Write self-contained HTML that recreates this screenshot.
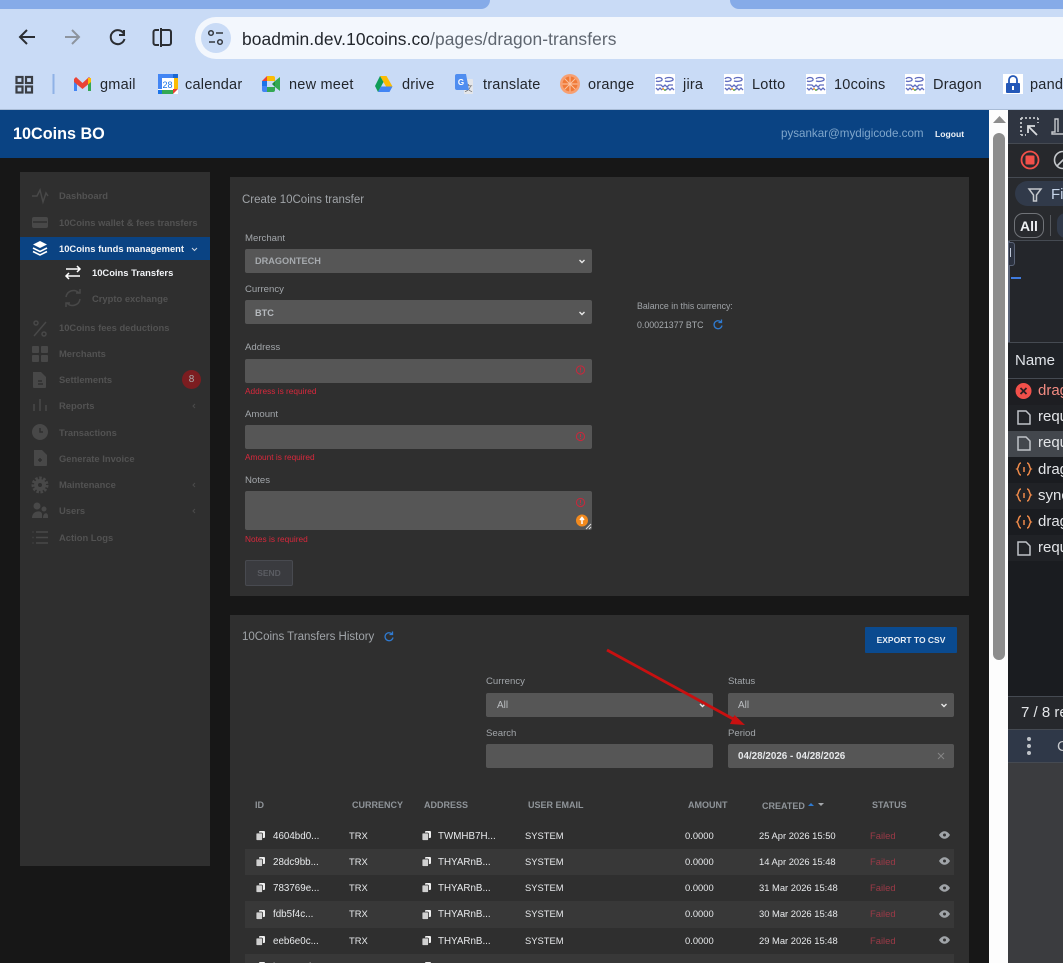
<!DOCTYPE html>
<html><head><meta charset="utf-8"><title>10Coins BO</title>
<style>
html,body{margin:0;padding:0;background:#171717;overflow:hidden;width:1063px;height:963px}
#root{position:relative;width:1063px;height:963px;overflow:hidden;font-family:"Liberation Sans",sans-serif}
.b{position:absolute}
.t{position:absolute;white-space:nowrap;line-height:14px;height:14px}
svg{position:absolute;overflow:visible}
.bm{font-size:14.5px;color:#22262c;letter-spacing:.22px}
.s{font-size:9.4px;color:#525252;font-weight:bold}
.l{font-size:9.6px;color:#a2a6aa;margin-top:1px}
.inp{position:absolute;background:#565656;border-radius:2px}
.err{font-size:8.3px;color:#d8283c}
.th{font-size:9px;color:#8f9499;font-weight:bold}
.td{font-size:9.4px;color:#e8eaec}
.id{font-size:9.8px;margin-top:1px}
.f{font-size:9.4px;color:#9c3a47}
.dv{font-size:15px;color:#e3e5e8}
</style></head><body><div id="root">
<!-- chrome -->
<div class="b" style="left:0;top:0;width:1063px;height:110px;background:#c9dbf6"></div>
<div class="b" style="left:0;top:0;width:490px;height:9px;background:#86abe8;border-radius:0 0 9px 0"></div>
<div class="b" style="left:730px;top:0;width:333px;height:9px;background:#86abe8;border-radius:0 0 0 9px"></div>
<div class="b" style="left:195px;top:17px;width:868px;height:42px;background:#f3f7fd;border-radius:21px 0 0 21px"></div>
<div class="b" style="left:201px;top:23px;width:30px;height:30px;background:#c9dbf6;border-radius:50%"></div>
<div class="b" style="left:0;top:109px;width:1063px;height:1px;background:#a9bcd6"></div>
<svg style="left:0;top:0" width="240" height="60" fill="none" stroke="#2b2e33" stroke-width="2">
<path d="M35 37H21M27 30l-7 7 7 7"/>
<path d="M79 37H65M72 30l7 7-7 7" stroke="#8d949e"/>
<path d="M124 34a7 7 0 1 0 .5 5M124 30v5h-5"/>
<path d="M159 30h-3.500a2 2 0 0 0-2 2v11a2 2 0 0 0 2 2h3.500M161 28v19M161 30h8a2 2 0 0 1 2 2v11a2 2 0 0 1-2 2h-8"/>
<g stroke-width="1.500" stroke="#33373d"><circle cx="211" cy="33" r="2.300"/><path d="M216 33h7M209 42h6"/><circle cx="220" cy="42" r="2.300"/></g>
</svg>
<div class="t" style="left:242px;top:30px;font-size:17.4px;line-height:18px;height:18px;color:#22262c;letter-spacing:.08px">boadmin.dev.10coins.co<span style="color:#5f6670">/pages/dragon-transfers</span></div>
<!-- bookmark icons -->
<svg style="left:0;top:70px" width="1063" height="30">
<g fill="none" stroke="#3a3e44" stroke-width="2.200"><rect x="16.500" y="7" width="6" height="6"/><rect x="26" y="7" width="6" height="6"/><rect x="16.500" y="16.500" width="6" height="6"/><rect x="26" y="16.500" width="6" height="6"/></g>
<rect x="52.500" y="4" width="2" height="20" fill="#8fb2e6"/>
<!-- gmail -->
<g transform="translate(2,0)"><path d="M72 21V9h3v12z" fill="#4285f4"/><path d="M86 21h3V9h-3z" fill="#34a853"/><path d="M72 9l2-2 6.500 6 6.500-6 2 2v3l-8.500 7-8.500-7z" fill="#ea4335"/><path d="M86 8l3 0v4l-3 2.500z" fill="#fbbc04"/></g>
<!-- calendar -->
<g transform="translate(5,0)"><rect x="153" y="4" width="20" height="20" fill="#fff"/><path d="M153 4h15v4h-11v11h-4z" fill="#4285f4"/><path d="M168 4h5v4h-5z" fill="#1967d2"/><path d="M169 8h4v11h-4z" fill="#fbbc04"/><path d="M157 20h11v4h-11z" fill="#34a853"/><path d="M153 20h4v4h-4z" fill="#1a73e8"/><path d="M168 19h5l-5 5z" fill="#ea4335"/>
<text x="162.500" y="18" font-size="9" fill="#1a73e8" text-anchor="middle" font-family="Liberation Sans">28</text></g>
<!-- meet -->
<g transform="translate(8,0)"><path d="M254 11l5-5v5z" fill="#ea4335"/><path d="M259 6h6a2 2 0 0 1 2 2v3h-8z" fill="#fbbc04"/><path d="M254 11h5v5h-5z" fill="#1a73e8"/><path d="M254 16h5v6h-3a2 2 0 0 1-2-2z" fill="#4285f4"/><path d="M259 17h8v3a2 2 0 0 1-2 2h-6z" fill="#34a853"/><path d="M267 11v6l5 4V7z" fill="#34a853"/><path d="M267 11l-3 3 3 3z" fill="#1e8e3e"/></g>
<!-- drive -->
<g transform="translate(12,0)"><path d="M368 6h6.500l6 10.500h-6.500z" fill="#fbbc04"/><path d="M368 6l-5 10 3 6 5.500-10z" fill="#0f9d58"/><path d="M366 22h11.500l3-5.500H369z" fill="#4285f4"/></g>
<!-- translate -->
<g transform="translate(14,0)"><rect x="450" y="9" width="9" height="15" rx="1" fill="#e4e6ea"/><text x="454.500" y="21" font-size="8" fill="#666" text-anchor="middle" font-family="Noto Sans CJK SC">文</text>
<path d="M443 4h9l3 16h-12a2 2 0 0 1-2-2V6a2 2 0 0 1 2-2z" fill="#4f8df0"/><text x="447" y="15" font-size="8" font-weight="bold" fill="#fff" text-anchor="middle" font-family="Liberation Sans">G</text></g>
<!-- orange -->
<circle cx="570" cy="14" r="10" fill="#f7a072"/><circle cx="570" cy="14" r="7.500" fill="#f07a38"/><g stroke="#fbc7a6" stroke-width="1"><path d="M570 6.500v15M562.500 14h15M564.700 8.700l10.600 10.600M575.300 8.700l-10.600 10.600"/></g>
<!-- weave icons -->
<g id="wv"><rect x="655" y="4" width="20" height="20" fill="#fff"/><g fill="none" stroke="#5f6cc0" stroke-width="1.300"><path d="M656 9c1-2 5-2 6 0s-4 3-6 2M665 9c1-2 7-2 8 0s-5 3-8 2M656 15h5l2 2 2-2 2 2 2-2h4M656 18l2 2 2-2 2 2M666 20l2-2 2 2 2-2 2 2"/></g><circle cx="663" cy="19" r="1" fill="#e88a2a"/><circle cx="665" cy="20" r="1" fill="#58a545"/></g>
<use href="#wv" x="69"/><use href="#wv" x="151"/><use href="#wv" x="250"/>
<!-- lock -->
<rect x="1003" y="4" width="20" height="20" fill="#fff"/><rect x="1006" y="13" width="14" height="10" rx="1" fill="#2458b8"/><path d="M1009 13v-3a4 4 0 0 1 8 0v3" fill="none" stroke="#2458b8" stroke-width="1.800"/><rect x="1012" y="16" width="2" height="4" fill="#fff"/>
</svg>
<div class="t bm" style="left:100px;top:78px">gmail</div>
<div class="t bm" style="left:185px;top:78px">calendar</div>
<div class="t bm" style="left:289px;top:78px">new meet</div>
<div class="t bm" style="left:402px;top:78px">drive</div>
<div class="t bm" style="left:483px;top:78px">translate</div>
<div class="t bm" style="left:588px;top:78px">orange</div>
<div class="t bm" style="left:683px;top:78px">jira</div>
<div class="t bm" style="left:752px;top:78px">Lotto</div>
<div class="t bm" style="left:834px;top:78px">10coins</div>
<div class="t bm" style="left:933px;top:78px">Dragon</div>
<div class="t bm" style="left:1030px;top:78px">pandora</div>

<!-- app header -->
<div class="b" style="left:0;top:110px;width:989px;height:48px;background:#0a4383"></div>
<div class="t" style="left:13px;top:126px;font-size:16.2px;line-height:16px;height:16px;font-weight:bold;color:#fff">10Coins BO</div>
<div class="t" style="left:781px;top:127px;font-size:11.6px;color:#7fa6cb">pysankar@mydigicode.com</div>
<div class="t" style="left:935px;top:127px;font-size:8.6px;font-weight:bold;color:#eef2f7">Logout</div>

<!-- sidebar -->
<div class="b" style="left:20px;top:172px;width:190px;height:694px;background:#2f2f2f"></div>
<div class="b" style="left:20px;top:237px;width:190px;height:23px;background:#0a4383"></div>
<svg style="left:0;top:0" width="230" height="560" fill="none" stroke="#484848" stroke-width="1.500">
<path d="M32 196h5l3-6 3 12 3-9 2 3"/>
<rect x="32" y="217" width="16" height="11" rx="2" fill="#484848" stroke="none"/><path d="M33 222h14" stroke="#2f2f2f"/>
<g fill="#fff" stroke="none"><path d="M40 241l7 3.500-7 3.500-7-3.500z"/></g><path d="M33 248l7 3.500 7-3.500M33 251.500l7 3.500 7-3.500" stroke="#fff" stroke-width="1.600"/>
<path d="M66 269h14M77 266l3 3-3 3M80 276H66M69 273l-3 3 3 3" stroke="#fff" stroke-width="1.500"/>
<path d="M66 297a7.500 7.500 0 0 1 13-4M80 299a7.500 7.500 0 0 1-13 4M76 293h4v-4M70 303h-4v4"/>
<path d="M46 322l-12 14" stroke-width="1.500"/><circle cx="36" cy="323" r="2"/><circle cx="44" cy="334" r="2"/>
<g fill="#484848" stroke="none"><rect x="32" y="346" width="7" height="7" rx="1"/><rect x="41" y="346" width="7" height="7" rx="1"/><rect x="32" y="355" width="7" height="7" rx="1"/><rect x="41" y="355" width="7" height="7" rx="1"/>
<path d="M33 372h8l5 5v10a1 1 0 0 1-1 1H34a1 1 0 0 1-1-1z"/><circle cx="40" cy="432" r="8"/><path d="M34 450h8l5 5v10a1 1 0 0 1-1 1H35a1 1 0 0 1-1-1z"/>
<circle cx="40" cy="485" r="6"/><circle cx="37" cy="506" r="3.500"/><circle cx="44" cy="509" r="2.500"/><path d="M32 518c0-8 10-8 10-4v4zM43 518c0-6 5-6 5-2v2z"/></g>
<path d="M38 381h4M38 384h5" stroke="#2f2f2f"/>
<path d="M34 411v-7M40 411v-12M46 411v-6"/>
<path d="M40 428v4h3" stroke="#2f2f2f"/><path d="M38 460h4M40 458v4" stroke="#2f2f2f"/>
<circle cx="40" cy="485" r="7" stroke-width="3" stroke-dasharray="2.500 1.500"/><circle cx="40" cy="485" r="2" fill="#2f2f2f" stroke="none"/>
<path d="M36 532h12M36 537.500h12M36 543h12M32.500 532h1M32.500 537.500h1M32.500 543h1"/>
<path d="M192 248l2.500 2.500 2.500-2.500" stroke="#cfd8e3" stroke-width="1"/>
<path d="M195 404l-2 2 2 2M195 483l-2 2 2 2M195 509l-2 2 2 2" stroke-width="1" stroke="#4a4a4a"/>
</svg>
<div class="t s" style="left:59px;top:189px">Dashboard</div>
<div class="t s" style="left:59px;top:216px">10Coins wallet &amp; fees transfers</div>
<div class="t s" style="left:59px;top:242px;color:#f2f4f7">10Coins funds management</div>
<div class="t s" style="left:92px;top:266px;color:#f2f4f7">10Coins Transfers</div>
<div class="t s" style="left:92px;top:292px">Crypto exchange</div>
<div class="t s" style="left:59px;top:321px">10Coins fees deductions</div>
<div class="t s" style="left:59px;top:347px">Merchants</div>
<div class="t s" style="left:59px;top:373px">Settlements</div>
<div class="t s" style="left:59px;top:399px">Reports</div>
<div class="t s" style="left:59px;top:426px">Transactions</div>
<div class="t s" style="left:59px;top:452px">Generate Invoice</div>
<div class="t s" style="left:59px;top:478px">Maintenance</div>
<div class="t s" style="left:59px;top:504px">Users</div>
<div class="t s" style="left:59px;top:531px">Action Logs</div>
<div class="b" style="left:182px;top:370px;width:19px;height:19px;border-radius:50%;background:#7c1d20"></div>
<div class="t" style="left:182px;top:373px;width:19px;text-align:center;font-size:10px;color:#aaa">8</div>

<!-- card 1 -->
<div class="b" style="left:230px;top:177px;width:739px;height:419px;background:#2f2f2f"></div>
<div class="t" style="left:242px;top:193px;font-size:11.5px;color:#a0a4a8">Create 10Coins transfer</div>
<div class="t l" style="left:245px;top:231px">Merchant</div>
<div class="inp" style="left:245px;top:249px;width:347px;height:24px"></div>
<div class="t" style="left:255px;top:254px;font-size:9.2px;font-weight:bold;color:#a6aaae">DRAGONTECH</div>
<div class="t l" style="left:245px;top:282px">Currency</div>
<div class="inp" style="left:245px;top:300px;width:347px;height:24px"></div>
<div class="t" style="left:255px;top:306px;font-size:9.2px;font-weight:bold;color:#b6babe">BTC</div>
<div class="t l" style="left:245px;top:340px">Address</div>
<div class="inp" style="left:245px;top:359px;width:347px;height:24px"></div>
<div class="t err" style="left:245px;top:384px">Address is required</div>
<div class="t l" style="left:245px;top:407px">Amount</div>
<div class="inp" style="left:245px;top:425px;width:347px;height:24px"></div>
<div class="t err" style="left:245px;top:450px">Amount is required</div>
<div class="t l" style="left:245px;top:473px">Notes</div>
<div class="inp" style="left:245px;top:491px;width:347px;height:39px"></div>
<div class="t err" style="left:245px;top:532px">Notes is required</div>
<div class="b" style="left:245px;top:560px;width:46px;height:24px;background:#3a3b3f;border:1px solid #484a50;border-radius:2px"></div>
<div class="t" style="left:245px;top:566px;width:48px;text-align:center;font-size:8.5px;font-weight:bold;color:#5a5c62">SEND</div>
<div class="t" style="left:637px;top:299px;font-size:8.8px;color:#a0a4a8">Balance in this currency:</div>
<div class="t" style="left:637px;top:318px;font-size:8.8px;color:#a8acb0">0.00021377 BTC</div>

<!-- card 2 -->
<div class="b" style="left:230px;top:615px;width:739px;height:348px;background:#2f2f2f"></div>
<div class="t" style="left:242px;top:630px;font-size:11.5px;color:#a0a4a8">10Coins Transfers History</div>
<div class="b" style="left:865px;top:627px;width:92px;height:26px;background:#0a4a8f;border-radius:1px"></div>
<div class="t" style="left:865px;top:633px;width:92px;text-align:center;font-size:8.5px;font-weight:bold;color:#e8eef5">EXPORT TO CSV</div>
<div class="t l" style="left:486px;top:674px">Currency</div>
<div class="t l" style="left:728px;top:674px">Status</div>
<div class="inp" style="left:486px;top:693px;width:227px;height:24px"></div>
<div class="inp" style="left:728px;top:693px;width:226px;height:24px"></div>
<div class="t" style="left:497px;top:699px;font-size:10px;color:#bcbfc2">All</div>
<div class="t" style="left:738px;top:699px;font-size:10px;color:#bcbfc2">All</div>
<div class="t l" style="left:486px;top:726px">Search</div>
<div class="t l" style="left:728px;top:726px">Period</div>
<div class="inp" style="left:486px;top:744px;width:227px;height:24px"></div>
<div class="inp" style="left:728px;top:744px;width:226px;height:24px"></div>
<div class="t" style="left:738px;top:750px;font-size:9.85px;font-weight:bold;color:#e6e8ea">04/28/2026 - 04/28/2026</div>

<div class="b" style="left:245px;top:849px;width:709px;height:26px;background:#383838"></div>
<div class="b" style="left:245px;top:901px;width:709px;height:27px;background:#383838"></div>
<div class="b" style="left:245px;top:954px;width:709px;height:9px;background:#383838"></div>

<div class="t th" style="left:255px;top:798px">ID</div>
<div class="t th" style="left:352px;top:798px">CURRENCY</div>
<div class="t th" style="left:424px;top:798px">ADDRESS</div>
<div class="t th" style="left:528px;top:798px">USER EMAIL</div>
<div class="t th" style="left:688px;top:798px">AMOUNT</div>
<div class="t th" style="left:762px;top:799px">CREATED</div>
<div class="t th" style="left:872px;top:798px">STATUS</div>

<div class="t td id" style="left:273px;top:829px">4604bd0...</div><div class="t td" style="left:349px;top:829px">TRX</div><div class="t td id" style="left:438px;top:829px">TWMHB7H...</div><div class="t td" style="left:525px;top:829px">SYSTEM</div><div class="t td" style="left:685px;top:829px">0.0000</div><div class="t td" style="left:759px;top:829px">25 Apr 2026 15:50</div><div class="t f" style="left:870px;top:829px">Failed</div>
<div class="t td id" style="left:273px;top:855px">28dc9bb...</div><div class="t td" style="left:349px;top:855px">TRX</div><div class="t td id" style="left:438px;top:855px">THYARnB...</div><div class="t td" style="left:525px;top:855px">SYSTEM</div><div class="t td" style="left:685px;top:855px">0.0000</div><div class="t td" style="left:759px;top:855px">14 Apr 2026 15:48</div><div class="t f" style="left:870px;top:855px">Failed</div>
<div class="t td id" style="left:273px;top:881px">783769e...</div><div class="t td" style="left:349px;top:881px">TRX</div><div class="t td id" style="left:438px;top:881px">THYARnB...</div><div class="t td" style="left:525px;top:881px">SYSTEM</div><div class="t td" style="left:685px;top:881px">0.0000</div><div class="t td" style="left:759px;top:881px">31 Mar 2026 15:48</div><div class="t f" style="left:870px;top:881px">Failed</div>
<div class="t td id" style="left:273px;top:907px">fdb5f4c...</div><div class="t td" style="left:349px;top:907px">TRX</div><div class="t td id" style="left:438px;top:907px">THYARnB...</div><div class="t td" style="left:525px;top:907px">SYSTEM</div><div class="t td" style="left:685px;top:907px">0.0000</div><div class="t td" style="left:759px;top:907px">30 Mar 2026 15:48</div><div class="t f" style="left:870px;top:907px">Failed</div>
<div class="t td id" style="left:273px;top:934px">eeb6e0c...</div><div class="t td" style="left:349px;top:934px">TRX</div><div class="t td id" style="left:438px;top:934px">THYARnB...</div><div class="t td" style="left:525px;top:934px">SYSTEM</div><div class="t td" style="left:685px;top:934px">0.0000</div><div class="t td" style="left:759px;top:934px">29 Mar 2026 15:48</div><div class="t f" style="left:870px;top:934px">Failed</div>
<div class="t td id" style="left:273px;top:960px">b3e1a7d...</div><div class="t td id" style="left:438px;top:960px">THYARnB...</div>

<svg style="left:0;top:0" width="1000" height="963" fill="none">
<defs><g id="cp"><rect x="3" y="0" width="6" height="7" rx="1" fill="#f0f0f0"/><rect x="0" y="2" width="6.500" height="7.500" rx="1" fill="#d0d0d0" stroke="#2f2f2f" stroke-width=".8"/></g>
<g id="ey"><path d="M0 4c3-5 8-5 11 0-3 5-8 5-11 0z" fill="#a0a4a8"/><circle cx="5.500" cy="4" r="1.500" fill="#333"/></g>
<path id="ch" d="M0 0l2.500 2.500 2.500-2.500" stroke="#e8e8e8" stroke-width="1.400"/>
<g id="ex"><circle cx="0" cy="0" r="4.100" stroke="#c8283c" stroke-width="1"/><path d="M0-2.500v3M0 1.400v1" stroke="#c8283c" stroke-width="1"/></g></defs>
<use href="#ch" x="579.500" y="260"/><use href="#ch" x="579.500" y="312"/><use href="#ch" x="941.500" y="704"/><use href="#ch" x="700" y="704"/>
<use href="#ex" x="580.500" y="370"/><use href="#ex" x="580.500" y="436.500"/><use href="#ex" x="580.500" y="502.500"/>
<path d="M586 529l5-5M589 529l2-2" stroke="#ddd" stroke-width="1"/>
<circle cx="582" cy="520.500" r="6" fill="#f28a1e"/><path d="M582 524v-6M580 520l2-2.500 2 2.500" stroke="#fff" stroke-width="1.500"/>
<g stroke="#2f7ad0" stroke-width="1.300"><path d="M721 322a4 4 0 1 0 1 3.500M721.500 319.500v3h-3"/><path d="M392 634a4 4 0 1 0 1 3.500M392.500 631.500v3h-3"/></g>
<path d="M938 753l6 6M944 753l-6 6" stroke="#858585" stroke-width="1"/>
<path d="M808 806l3-3 3 3z" fill="#2f7ad0"/><path d="M818 803h6l-3 3z" fill="#a5a8ac"/>
<use href="#cp" x="256" y="831"/><use href="#cp" x="256" y="857"/><use href="#cp" x="256" y="883"/><use href="#cp" x="256" y="910"/><use href="#cp" x="256" y="936"/><use href="#cp" x="256" y="962"/>
<use href="#cp" x="422" y="831"/><use href="#cp" x="422" y="857"/><use href="#cp" x="422" y="883"/><use href="#cp" x="422" y="910"/><use href="#cp" x="422" y="936"/><use href="#cp" x="422" y="962"/>
<use href="#ey" x="939" y="831"/><use href="#ey" x="939" y="857"/><use href="#ey" x="939" y="884"/><use href="#ey" x="939" y="910"/><use href="#ey" x="939" y="936"/>
<path d="M607 650L735 720" stroke="#c81010" stroke-width="2.800"/><path d="M745 725l-15-1 4.500-9z" fill="#c81010"/>
</svg>

<!-- scrollbar -->
<div class="b" style="left:989px;top:110px;width:19px;height:853px;background:#fdfdfd"></div>
<div class="b" style="left:993px;top:133px;width:12px;height:527px;background:#8d8d8d;border-radius:6px"></div>
<svg style="left:993px;top:115px" width="13" height="9"><path d="M0 8L6.500 1 13 8z" fill="#8d8d8d"/></svg>

<!-- devtools -->
<div class="b" style="left:1008px;top:110px;width:55px;height:853px;background:#282a2e;overflow:hidden">
  <div class="b" style="left:0;top:0;width:55px;height:33px;background:#2f3541"></div>
  <div class="b" style="left:0;top:33px;width:55px;height:1px;background:#454a52"></div>
  <div class="b" style="left:0;top:34px;width:55px;height:33px;background:#26282c"></div>
  <div class="b" style="left:0;top:67px;width:55px;height:1px;background:#454a52"></div>
  <div class="b" style="left:7px;top:71px;width:60px;height:25px;background:#313a4a;border-radius:13px"></div>
  <div class="b" style="left:6px;top:103px;width:30px;height:25px;border:1px solid #707378;border-radius:9px;box-sizing:border-box"></div>
  <div class="b" style="left:42px;top:105px;width:1px;height:21px;background:#55585d"></div>
  <div class="b" style="left:49px;top:103px;width:20px;height:25px;background:#313a4a;border-radius:9px"></div>
  <div class="b" style="left:0;top:130px;width:55px;height:1px;background:#454a52"></div>
  <div class="b" style="left:0;top:131px;width:55px;height:101px;background:#24262b"></div>
  <div class="b" style="left:0;top:131px;width:2px;height:101px;background:#5b6478"></div>
  <div class="b" style="left:0;top:132px;width:5px;height:22px;background:#2c3240;border:1px solid #5b6478;border-radius:0 3px 3px 0"></div>
  <div class="b" style="left:2px;top:138px;width:1px;height:9px;background:#c0c8d8"></div>
  <div class="b" style="left:3px;top:167px;width:10px;height:2px;background:#3f7be0"></div>
  <div class="b" style="left:0;top:232px;width:55px;height:1px;background:#454a52"></div>
  <div class="b" style="left:0;top:233px;width:55px;height:35px;background:#1f2227"></div>
  <div class="b" style="left:0;top:268px;width:55px;height:318px;background:#1a1c20"></div>
  <div class="b" style="left:0;top:268px;width:55px;height:1px;background:#454a52"></div>
  <div class="b" style="left:0;top:269px;width:55px;height:26px;background:#1d1e22"></div>
  <div class="b" style="left:0;top:295px;width:55px;height:26px;background:#202226"></div>
  <div class="b" style="left:0;top:321px;width:55px;height:26px;background:#43474d"></div>
  <div class="b" style="left:0;top:347px;width:55px;height:26px;background:#1a1c20"></div>
  <div class="b" style="left:0;top:373px;width:55px;height:26px;background:#202226"></div>
  <div class="b" style="left:0;top:425px;width:55px;height:26px;background:#202226"></div>
  <div class="b" style="left:0;top:586px;width:55px;height:1px;background:#454a52"></div>
  <div class="b" style="left:0;top:587px;width:55px;height:32px;background:#26282c"></div>
  <div class="b" style="left:0;top:619px;width:55px;height:34px;background:#2f3848;border-top:1px solid #454a52;border-bottom:1px solid #454a52;box-sizing:border-box"></div>
  <div class="b" style="left:0;top:653px;width:55px;height:200px;background:#3b3c3f"></div>
  <div class="t dv" style="left:43px;top:78px;color:#c5d4e8">Filter</div>
  <div class="t" style="left:6px;top:109px;width:30px;text-align:center;font-size:14px;font-weight:bold;color:#eef0f3">All</div>
  <div class="t dv" style="left:7px;top:244px;color:#dfe3e8">Name</div>
  <div class="t dv" style="left:30px;top:274px;color:#f28b82">dragon</div>
  <div class="t dv" style="left:30px;top:300px">request</div>
  <div class="t dv" style="left:30px;top:326px">request</div>
  <div class="t dv" style="left:30px;top:353px">dragon</div>
  <div class="t dv" style="left:30px;top:379px">sync</div>
  <div class="t dv" style="left:30px;top:405px">dragon</div>
  <div class="t dv" style="left:30px;top:431px">request</div>
  <div class="t dv" style="left:13px;top:596px">7 / 8 requests</div>
  <div class="t dv" style="left:49px;top:630px;color:#c5c8cc">Console</div>
  <svg style="left:0;top:0" width="55" height="700" fill="none">
    <path d="M13 8h17M13 8v17M13 25h5M30 8v5" stroke="#c5c8cc" stroke-width="1.800" stroke-dasharray="2 2"/><path d="M29 25l-9-9M20 23v-7h7" stroke="#d8dadd" stroke-width="1.800"/>
    <path d="M50 22V9h-3v13h-3v2h11" stroke="#c5c8cc" stroke-width="1.400"/>
    <circle cx="22" cy="50" r="8.500" stroke="#f2504a" stroke-width="1.800"/><rect x="17.500" y="45.500" width="9" height="9" rx="1" fill="#f2504a"/>
    <circle cx="55" cy="50" r="8.500" stroke="#c5c8cc" stroke-width="1.600"/><path d="M49 56l12-12" stroke="#c5c8cc" stroke-width="1.600"/>
    <path d="M21 79h12l-4.500 6v6h-3v-6z" stroke="#c5c8cc" stroke-width="1.500"/>
    <circle cx="15.500" cy="281" r="8" fill="#f2504a"/><path d="M12.500 278l6 6M18.500 278l-6 6" stroke="#2a1f22" stroke-width="1.800"/>
    <path d="M10 301h8l4 4v9H10z" stroke="#c0c3c8" stroke-width="1.500"/>
    <path d="M10 327h8l4 4v9H10zM10 432h8l4 4v9H10z" stroke="#c0c3c8" stroke-width="1.500"/>
    <g stroke="#ee8a4a" stroke-width="1.500"><path d="M13 353c-3 0-2 5-4 6 2 1 1 6 4 6M19 353c3 0 2 5 4 6-2 1-1 6-4 6M16 357v5M13 379c-3 0-2 5-4 6 2 1 1 6 4 6M19 379c3 0 2 5 4 6-2 1-1 6-4 6M16 383v5M13 406c-3 0-2 5-4 6 2 1 1 6 4 6M19 406c3 0 2 5 4 6-2 1-1 6-4 6M16 410v5"/></g>
    <g fill="#bfc3c8"><circle cx="21" cy="629" r="2"/><circle cx="21" cy="636" r="2"/><circle cx="21" cy="643" r="2"/></g>
  </svg>
</div>
</div></body></html>
